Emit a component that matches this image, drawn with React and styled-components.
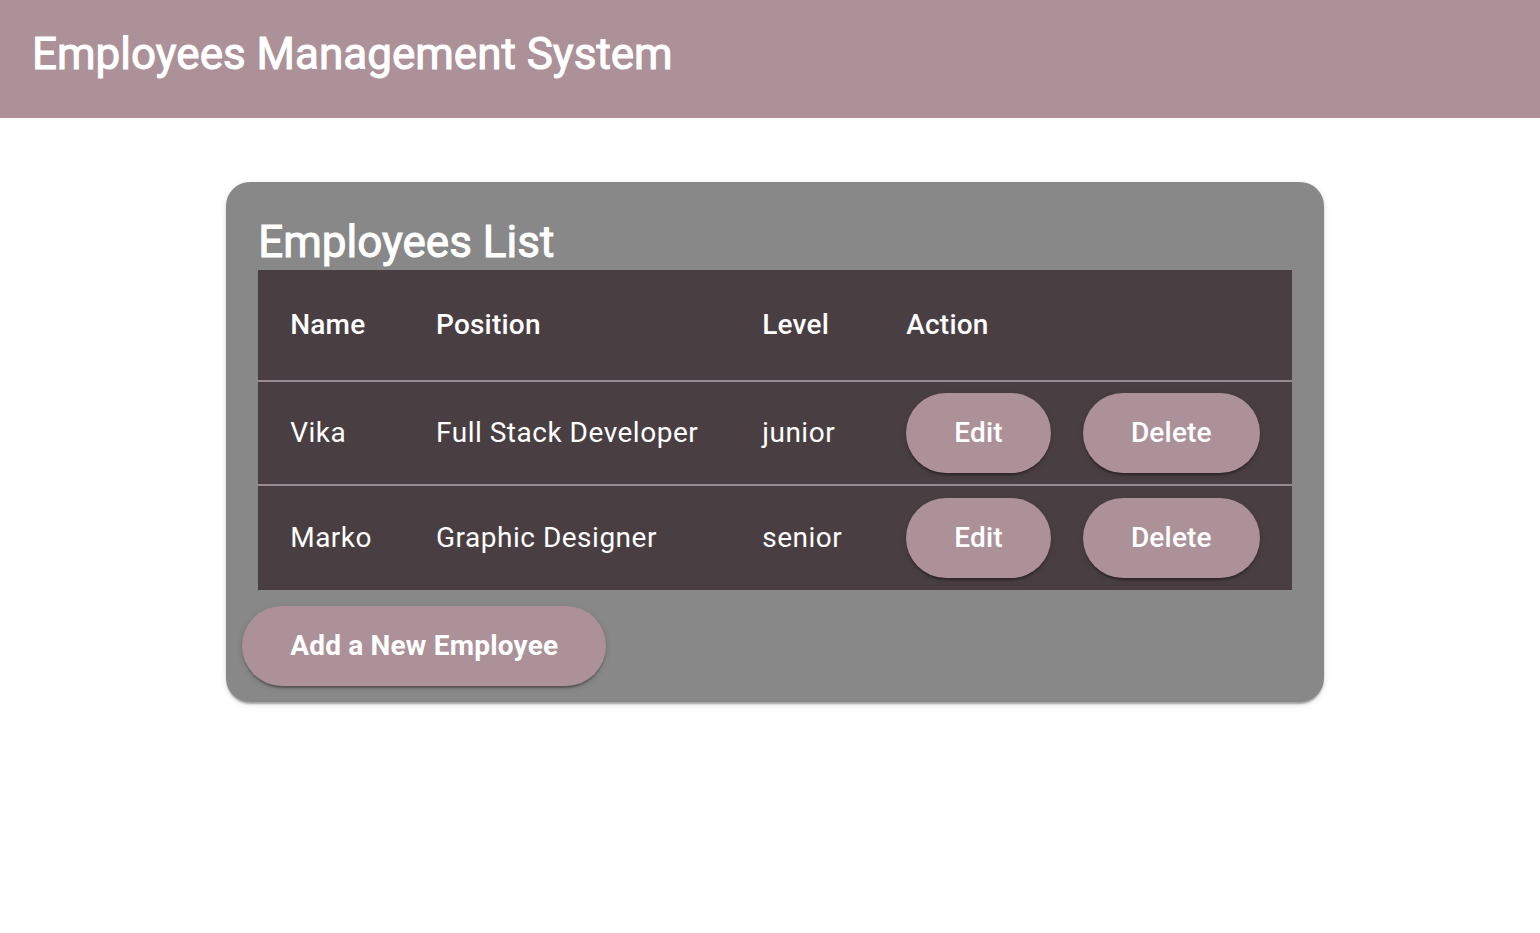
import React from 'react';
import styled, { createGlobalStyle, css } from 'styled-components';

const GlobalStyle = createGlobalStyle`
  body {
    margin: 0;
    background: #fff;
    color: #fff;
    font-family: Roboto, "Liberation Sans", sans-serif;
    -webkit-font-smoothing: antialiased;
  }
`;

const elevation = css`
  box-shadow: 0 4px 2px -2px rgba(0, 0, 0, 0.2), 0 2px 2px rgba(0, 0, 0, 0.14),
    0 2px 6px rgba(0, 0, 0, 0.12);
`;

const Header = styled.header`
  box-sizing: border-box;
  min-height: 118px;
  padding: 26px 32px;
  background: #ad9199;
`;

const Title = styled.h1`
  margin: 0;
  font-size: 44px;
  font-weight: 400;
  line-height: 56px;
  -webkit-text-stroke: 1px currentColor;
`;

const Main = styled.main`
  display: flex;
  justify-content: center;
  padding: 64px 0 64px 10px;
`;

const Card = styled.section`
  border-radius: 24px;
  background: #888;
  ${elevation}
`;

const CardBody = styled.div`
  padding: 32px 32px 0;
`;

const CardActions = styled.div`
  padding: 16px;
`;

const Table = styled.table`
  border-collapse: separate;
  border-spacing: 0;
  background: #493e42;
  font-size: 28px;
  line-height: 40px;
`;

const HeadCell = styled.th`
  box-sizing: border-box;
  height: 112px;
  padding: 0 32px;
  border-bottom: 2px solid #968992;
  font-weight: 500;
  letter-spacing: 0.007em;
  text-align: left;
`;

const Cell = styled.td`
  box-sizing: border-box;
  height: 104px;
  padding: 0 32px;
  border-bottom: 2px solid #968992;
  letter-spacing: 0.018em;
  white-space: nowrap;

  tr:last-child > & {
    border-bottom: 0;
  }
`;

const ButtonGroup = styled.div`
  display: flex;
  gap: 32px;
`;

const Button = styled.button`
  height: 80px;
  padding: 0 48px;
  border: 0;
  border-radius: 40px;
  background: #ad9199;
  ${elevation}
  color: #fff;
  font-family: inherit;
  font-size: 28px;
  font-weight: ${(p) => (p.$strong ? 700 : 500)};
  letter-spacing: 0.007em;
  line-height: 40px;
  white-space: nowrap;
  cursor: pointer;
`;

const employees = [
  { name: 'Vika', position: 'Full Stack Developer', level: 'junior' },
  { name: 'Marko', position: 'Graphic Designer', level: 'senior' },
];

export default function App() {
  return (
    <>
      <GlobalStyle />
      <Header>
        <Title>Employees Management System</Title>
      </Header>
      <Main>
        <Card>
          <CardBody>
            <Title as="h2">Employees List</Title>
            <Table>
              <thead>
                <tr>
                  <HeadCell scope="col">Name</HeadCell>
                  <HeadCell scope="col">Position</HeadCell>
                  <HeadCell scope="col">Level</HeadCell>
                  <HeadCell scope="col">Action</HeadCell>
                </tr>
              </thead>
              <tbody>
                {employees.map((e) => (
                  <tr key={e.name}>
                    <Cell>{e.name}</Cell>
                    <Cell>{e.position}</Cell>
                    <Cell>{e.level}</Cell>
                    <Cell>
                      <ButtonGroup>
                        <Button type="button">Edit</Button>
                        <Button type="button">Delete</Button>
                      </ButtonGroup>
                    </Cell>
                  </tr>
                ))}
              </tbody>
            </Table>
          </CardBody>
          <CardActions>
            <Button type="button" $strong>Add a New Employee</Button>
          </CardActions>
        </Card>
      </Main>
    </>
  );
}
